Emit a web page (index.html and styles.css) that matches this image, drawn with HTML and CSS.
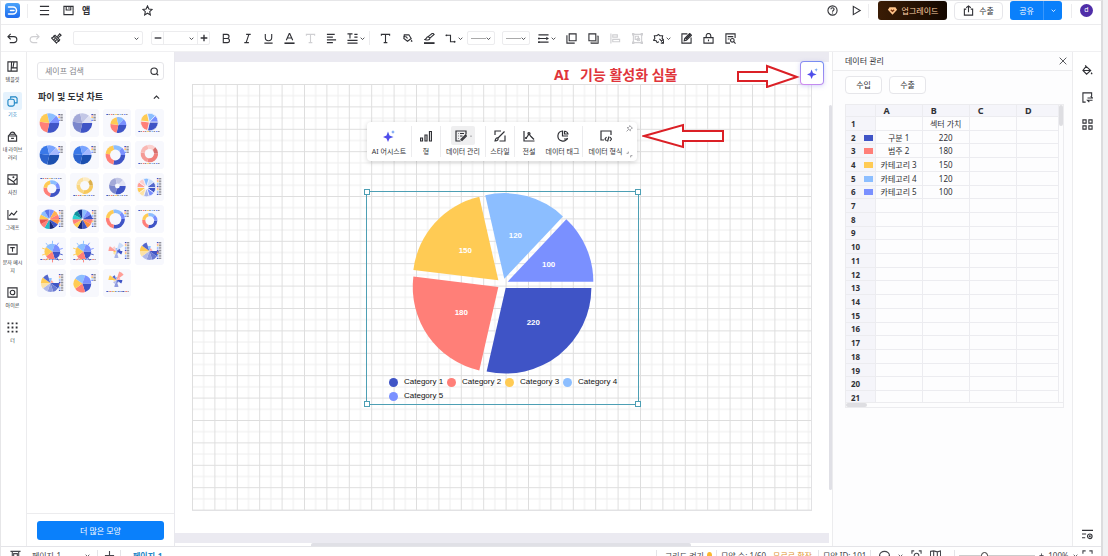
FILE: index.html
```html
<!DOCTYPE html>
<html lang="ko">
<head>
<meta charset="utf-8">
<title>데이터 관리</title>
<link rel="stylesheet" href="styles.css">
</head>
<body>
<svg class="defs" aria-hidden="true">
  <symbol id="menu" viewBox="0 0 24 24"><path d="M2 3h20M2 12h20M2 21h20"/></symbol>
  <symbol id="save" viewBox="0 0 24 24"><path d="M2 3h20v18H2zM7 3v8h10V3M13 5v3"/></symbol>
  <symbol id="star" viewBox="0 0 24 24"><path d="M12 2l3 6.600 7 .9-5.200 4.900 1.400 7.100L12 18l-6.200 3.500 1.400-7.100L2 9.500l7-.9z"/></symbol>
  <symbol id="help" viewBox="0 0 24 24"><circle cx="12" cy="12" r="10"/><path d="M8.500 9.500c0-4.500 7-4.500 7 0 0 2.500-3.500 2.500-3.500 5M12 16.500v2"/></symbol>
  <symbol id="play" viewBox="0 0 24 24"><path d="M5 3l15 9-15 9z"/></symbol>
  <symbol id="export" viewBox="0 0 24 24"><path d="M7 9H3v13h18V9h-4M12 16V2M7 6l5-4 5 4"/></symbol>
  <symbol id="chev" viewBox="0 0 24 24"><path d="M3 8l9 9 9-9"/></symbol>
  <symbol id="undo" viewBox="0 0 24 24"><path d="M8 2L2 8l6 6M2 8h13a6 6 0 0 1 0 13H6"/></symbol>
  <symbol id="redo" viewBox="0 0 24 24"><path d="M16 2l6 6-6 6M22 8H9a6 6 0 0 0 0 13h9"/></symbol>
  <symbol id="brush" viewBox="0 0 24 24"><path d="M14 8l5-6 3 3-6 5M9 5l10 10-2 3L6 7zM6 7c-1 3-3 4-5 4l11 11c1-2 2-4 5-4M6 15l3-3M9 18l3-3"/></symbol>
  <symbol id="bold" viewBox="0 0 24 24"><path d="M5 3h8a4.500 4.500 0 0 1 0 9H5zM5 12h9a4.500 4.500 0 0 1 0 9H5z"/></symbol>
  <symbol id="italic" viewBox="0 0 24 24"><path d="M9 3h10M5 21h10M15 3L9 21"/></symbol>
  <symbol id="underline" viewBox="0 0 24 24"><path d="M5 2v8a7 7 0 0 0 14 0V2M3 22h18"/></symbol>
  <symbol id="color" viewBox="0 0 24 24"><path d="M5 16L12 0l7 16M8 11h8"/><path d="M1 22.500h22" class="heavy"/></symbol>
  <symbol id="text" viewBox="0 0 24 24"><path d="M3 6V3h18v3M12 3v18M8 21h8"/></symbol>
  <symbol id="align" viewBox="0 0 24 24"><path d="M2 3h17M2 9h13M2 15h20M2 21h13"/></symbol>
  <symbol id="spacing" viewBox="0 0 24 24"><path d="M1 2h11M6.500 2v10M16 3h7M16 9h7M1 16h22M1 22h22"/></symbol>
  <symbol id="bucket" viewBox="0 0 24 24"><path d="M9 3l10 9-9 8-8-8zM3 12h15M9 3L7 1"/><path d="M21 15c-3 4-2 5 0 5s3-1 0-5z" class="solid"/></symbol>
  <symbol id="fill" viewBox="0 0 24 24"><path d="M5 4h10l5 8-8 6-8-6zM9 8l3 4M3 8h5"/><path d="M21 14c-3 4-2 5 0 5s3-1 0-5z" class="solid"/></symbol>
  <symbol id="pen" viewBox="0 0 24 24"><path d="M9 8L19 0l3 3-9 8zM9 8c-4 0-3 5-7 6 4 2 10 2 11-2"/><path d="M0 22h23" class="heavy"/></symbol>
  <symbol id="link" viewBox="0 0 24 24"><path d="M3 5h9v14h9"/><circle cx="3" cy="5" r="2" class="solid"/><circle cx="21" cy="19" r="2" class="solid"/></symbol>
  <symbol id="lines" viewBox="0 0 24 24"><path d="M1 4h22M1 12h18M1 20h22"/><path d="M18 8l6 4-6 4z" class="solid"/><circle cx="2" cy="12" r="2" class="solid"/><circle cx="2" cy="20" r="2" class="solid"/></symbol>
  <symbol id="front" viewBox="0 0 24 24"><path d="M7 2h15v15H7zM2 5v17h17"/></symbol>
  <symbol id="back" viewBox="0 0 24 24"><path d="M2 2h15v15H2zM20 7h2v15H7v-2"/><path d="M17 6h5v16H6v-5h11z" class="dim"/></symbol>
  <symbol id="distribute" viewBox="0 0 24 24"><path d="M2 1v22M6 4h10v5H6zM6 14h15v5H6z"/></symbol>
  <symbol id="group" viewBox="0 0 24 24"><path d="M3 3h18v18H3zM1 1h3v3H1zM20 1h3v3h-3zM1 20h3v3H1zM20 20h3v3h-3zM7 7h7v7H7z"/><circle cx="14" cy="14" r="3"/></symbol>
  <symbol id="fx" viewBox="0 0 24 24"><path d="M8 6l4-3 3 3h6l-1 6 3 3-5 2M8 6H3l1 6-3 4 6 1 2 4 4-2"/><path d="M14 13l8 8M17 22h6v-6"/></symbol>
  <symbol id="edit" viewBox="0 0 24 24"><path d="M14 2H2v20h20V10"/><path d="M7 17l1-5L19 1l4 4-11 11z"/><path d="M10 14L21 3" class="heavy"/></symbol>
  <symbol id="lock" viewBox="0 0 24 24"><path d="M2 10h20v12H2zM7 10V6a5 5 0 0 1 10 0v4M12 14v4"/></symbol>
  <symbol id="find" viewBox="0 0 24 24"><path d="M11 22H2V2h20v9M6 8h12M6 13h4"/><circle cx="16" cy="16" r="4"/><path d="M19 19l4 4"/></symbol>
  <symbol id="search" viewBox="0 0 24 24"><circle cx="11" cy="11" r="8.500"/><path d="M17 17l5 5"/></symbol>
  <symbol id="template" viewBox="0 0 24 24"><path d="M2 2h20v20H2zM10 2l-1 20M9 15h13M15 3l-2 12"/></symbol>
  <symbol id="shapes" viewBox="0 0 24 24"><path d="M8 6V2h11l3 3v10h-5"/><rect x="2" y="7" width="14" height="15" rx="4"/></symbol>
  <symbol id="library" viewBox="0 0 24 24"><path d="M3 11h18v11H3zM3 11l3-4h12l3 4M7 7c0-6 10-6 10 0M9 16h6"/></symbol>
  <symbol id="photo" viewBox="0 0 24 24"><path d="M2 2h20v20H2zM2 9l6 4 6 4 8-8M14 17l3 4"/><circle cx="14" cy="7" r="1"/></symbol>
  <symbol id="graph" viewBox="0 0 24 24"><path d="M2 2v20h21M5 15l5-6 5 4 7-9"/></symbol>
  <symbol id="textbox" viewBox="0 0 24 24"><path d="M2 2h20v20H2zM7 8h10M12 8v9"/></symbol>
  <symbol id="iconset" viewBox="0 0 24 24"><path d="M2 2h20v20H2z"/><circle cx="12" cy="12" r="5"/></symbol>
  <symbol id="theme" viewBox="0 0 24 24"><path d="M1 13a11 10 0 0 1 22 0l-3 1v8H4v-8z"/></symbol>
  <symbol id="dots" viewBox="0 0 24 24"><path class="heavy" d="M1 3h4M10 3h4M19 3h4M1 12h4M10 12h4M19 12h4M1 21h4M10 21h4M19 21h4"/></symbol>
  <symbol id="spark" viewBox="0 0 24 24"><path class="tint" d="M10 3l3 8 8 3-8 3-3 7-3-7-7-3 7-3zM20 0l1 3 3 1-3 1-1 3-1-3-3-1 3-1z"/></symbol>
  <symbol id="bars" viewBox="0 0 24 24"><path d="M1 16h4v6H1zM10 10h4v12h-4zM19 3h4v19h-4z"/></symbol>
  <symbol id="data" viewBox="0 0 24 24"><path d="M11 22H2V2h20v7M6 7h1M10 7h8M6 12h1M10 12h5M6 17h1M12 19l9-9 2 2-9 9z"/></symbol>
  <symbol id="style" viewBox="0 0 24 24"><path d="M2 10V2h12M22 11v11H11M8 16L21 3M2 22c1-5 3-7 6-6 1 3-1 6-6 6z"/></symbol>
  <symbol id="legend" viewBox="0 0 24 24"><path d="M2 2v20h21M6 17l6-9 4 5 6 6"/><circle cx="12" cy="7" r="2"/><circle cx="6" cy="16" r="1"/></symbol>
  <symbol id="tag" viewBox="0 0 24 24"><path d="M21 16A10 10 0 1 1 11 2v10h11M15 2c4 1 7 4 7 7M15 2v6h7M14 18h8"/></symbol>
  <symbol id="format" viewBox="0 0 24 24"><path d="M8 20H2V2h20v8M13 14l-3 4 3 4M20 14l3 4-3 4M18 13l-3 10"/></symbol>
  <symbol id="pin" viewBox="0 0 24 24"><path d="M13 2l9 9-3 1-4 4v4L4 9h4l4-4zM9 15l-7 7"/></symbol>
  <symbol id="resize" viewBox="0 0 24 24"><path d="M8 2v6H2M22 16h-6v6"/></symbol>
  <symbol id="close" viewBox="0 0 24 24"><path d="M2 2l20 20M22 2L2 22"/></symbol>
  <symbol id="replace" viewBox="0 0 24 24"><path d="M8 22H2V2h19v7M12 13h11l-4-4M23 18H12l4 4"/></symbol>
  <symbol id="tiles" viewBox="0 0 24 24"><path d="M2 2h7v7H2zM15 2h7v7h-7zM2 15h7v7H2zM15 15h7v7h-7z"/></symbol>
  <symbol id="settings" viewBox="0 0 24 24"><path d="M0 3h24M0 11h9M0 19h7"/><circle cx="17" cy="16" r="5"/><circle cx="17" cy="16" r="1"/></symbol>
  <symbol id="panel" viewBox="0 0 24 24"><path d="M1 3h22M5 3v20M19 3v20M8 8h8v12H8z"/></symbol>
  <symbol id="plus" viewBox="0 0 24 24"><path d="M12 2v20M2 12h20"/></symbol>
  <symbol id="minus" viewBox="0 0 24 24"><path d="M2 12h20"/></symbol>
  <symbol id="focus" viewBox="0 0 24 24"><path d="M2 8V2h5M17 2h5v6M2 16v6h5M17 22h5v-6"/><circle cx="12" cy="12" r="5"/></symbol>
  <symbol id="full" viewBox="0 0 24 24"><path d="M2 8V2h6M16 2h6v6M2 16v6h6M16 22h6v-6"/></symbol>
  <symbol id="map" viewBox="0 0 24 24"><path d="M1 3l7-1 8 2 7-2v19l-7 1-8-2-7 2zM8 2v18M16 4v18"/></symbol>
  <linearGradient id="sparkfill" x1="0" y1="1" x2="1" y2="0"><stop offset="0" stop-color="#5b3df0"/><stop offset=".6" stop-color="#4a55e8"/><stop offset="1" stop-color="#58b4f5"/></linearGradient>
  <linearGradient id="logofill" x1="0" y1="0" x2="0" y2="1"><stop offset="0" stop-color="#4aa3fa"/><stop offset="1" stop-color="#1d6bee"/></linearGradient>
</svg>

<div class="app">
  <header class="header">
    <svg class="logo" viewBox="0 0 30 30" role="img" aria-label="로고"><rect width="30" height="30" rx="6" fill="url(#logofill)"/><path d="M7 8h9a7 7 0 0 1 0 14H7M11 15h7" fill="none" stroke="#fff" stroke-width="3" stroke-linecap="round"/></svg>
    <span class="rule"></span>
    <button class="hbtn menu" aria-label="메뉴"><svg class="icon"><use href="#menu"/></svg></button>
    <button class="hbtn" aria-label="저장"><svg class="icon"><use href="#save"/></svg></button>
    <strong class="doc">앱</strong>
    <button class="hbtn fav" aria-label="즐겨찾기"><svg class="icon"><use href="#star"/></svg></button>
    <span class="grow"></span>
    <button class="hbtn" aria-label="도움말"><svg class="icon"><use href="#help"/></svg></button>
    <button class="hbtn" aria-label="재생"><svg class="icon"><use href="#play"/></svg></button>
    <span class="rule"></span>
    <button class="upgrade"><svg viewBox="0 0 24 24"><path d="M5 3h14l4 6-11 12L1 9z" fill="#ffc48a"/><path d="M8 9l4 4 4-4" fill="none" stroke="#7a3510" stroke-width="3"/></svg>업그레이드</button>
    <button class="outline export"><svg class="icon"><use href="#export"/></svg>수출</button>
    <div class="share"><button>공유</button><button aria-label="공유 옵션"><svg class="icon mini"><use href="#chev"/></svg></button></div>
    <span class="rule"></span>
    <span class="avatar">d</span>
  </header>

  <div class="toolbar" role="toolbar" aria-label="서식">
    <button aria-label="실행 취소"><svg class="icon"><use href="#undo"/></svg></button>
    <button class="off" aria-label="다시 실행"><svg class="icon"><use href="#redo"/></svg></button>
    <button aria-label="서식 복사"><svg class="icon"><use href="#brush"/></svg></button>
    <label class="pick font"><select aria-label="글꼴"><option></option></select><svg class="icon mini"><use href="#chev"/></svg></label>
    <div class="stepper">
      <button aria-label="작게"><svg class="icon"><use href="#minus"/></svg></button>
      <label class="pick"><select aria-label="글자 크기"><option></option></select><svg class="icon mini"><use href="#chev"/></svg></label>
      <button aria-label="크게"><svg class="icon"><use href="#plus"/></svg></button>
    </div>
    <div class="set tight">
      <button aria-label="굵게"><svg class="icon"><use href="#bold"/></svg></button>
      <button aria-label="기울임"><svg class="icon"><use href="#italic"/></svg></button>
      <button aria-label="밑줄"><svg class="icon"><use href="#underline"/></svg></button>
      <button aria-label="글자 색"><svg class="icon"><use href="#color"/></svg></button>
      <button class="off" aria-label="글자 효과"><svg class="icon"><use href="#text"/></svg></button>
      <button aria-label="정렬"><svg class="icon"><use href="#align"/></svg></button>
    </div>
    <button class="wide" aria-label="줄 간격"><svg class="icon"><use href="#spacing"/></svg><svg class="icon mini"><use href="#chev"/></svg></button>
    <span class="rule"></span>
    <div class="set">
      <button aria-label="텍스트"><svg class="icon"><use href="#text"/></svg></button>
      <button aria-label="채우기"><svg class="icon"><use href="#fill"/></svg></button>
      <button aria-label="선 색"><svg class="icon"><use href="#pen"/></svg></button>
    </div>
    <button class="wide" aria-label="연결선"><svg class="icon"><use href="#link"/></svg><svg class="icon mini"><use href="#chev"/></svg></button>
    <label class="pick line"><span class="stroke"></span><select aria-label="선 두께"><option></option></select><svg class="icon mini"><use href="#chev"/></svg></label>
    <label class="pick line"><span class="stroke"></span><select aria-label="선 종류"><option></option></select><svg class="icon mini"><use href="#chev"/></svg></label>
    <button class="wide" aria-label="화살표"><svg class="icon"><use href="#lines"/></svg><svg class="icon mini"><use href="#chev"/></svg></button>
    <button aria-label="앞으로"><svg class="icon"><use href="#front"/></svg></button>
    <button aria-label="뒤로"><svg class="icon"><use href="#back"/></svg></button>
    <button class="off" aria-label="맞춤"><svg class="icon"><use href="#distribute"/></svg></button>
    <button class="off" aria-label="그룹"><svg class="icon"><use href="#group"/></svg></button>
    <button class="wide" aria-label="효과"><svg class="icon"><use href="#fx"/></svg><svg class="icon mini"><use href="#chev"/></svg></button>
    <button aria-label="편집"><svg class="icon"><use href="#edit"/></svg></button>
    <button aria-label="잠금"><svg class="icon"><use href="#lock"/></svg></button>
    <button aria-label="찾기"><svg class="icon"><use href="#find"/></svg></button>
  </div>

  <main class="body">
    <nav class="rail">
      <button><span class="pic"><svg class="icon"><use href="#template"/></svg></span>템플릿</button>
      <button class="on"><span class="pic"><svg class="icon"><use href="#shapes"/></svg></span>기호</button>
      <button><span class="pic"><svg class="icon"><use href="#library"/></svg></span>내 라이브<br>러리</button>
      <button><span class="pic"><svg class="icon"><use href="#photo"/></svg></span>사진</button>
      <button><span class="pic"><svg class="icon"><use href="#graph"/></svg></span>그래프</button>
      <button><span class="pic"><svg class="icon"><use href="#textbox"/></svg></span>문자 메시<br>지</button>
      <button><span class="pic"><svg class="icon"><use href="#iconset"/></svg></span>아이콘</button>
      <button><span class="pic"><svg class="icon"><use href="#dots"/></svg></span>더</button>
    </nav>

    <aside class="shapes">
      <div class="search"><input type="text" placeholder="셰이프 검색" aria-label="셰이프 검색"><svg class="icon"><use href="#search"/></svg></div>
      <h2>파이 및 도넛 차트 <svg class="icon up"><use href="#chev"/></svg></h2>
      <div class="thumbs" id="thumbs"></div>
      <div class="more"><button>더 많은 모양</button></div>
    </aside>

    <section class="canvas" aria-label="캔버스">
      <div class="sheet"></div>
      <svg class="grid" aria-hidden="true">
        <pattern id="cell" width="22.4" height="22.4" patternUnits="userSpaceOnUse"><path d="M11.700 0v22.400M0 11.700h22.400" stroke="#eeeeee"/><path d="M.5 0v22.400M0 .5h22.400" stroke="#dedede" fill="none"/></pattern>
        <rect width="100%" height="100%" fill="url(#cell)"/>
      </svg>
      <span class="vscroll"></span><span class="hscroll"></span>

      <p class="note">AI&nbsp; &nbsp;기능 활성화 심볼</p>
      <svg class="arrow first" viewBox="0 0 64 24"><path d="M2 8h29V2l30 11-30 10v-6H2z"/></svg>
      <svg class="arrow second" viewBox="0 0 84 26"><path d="M2 13L41 2v6h40v10H41v6z"/></svg>
      <button class="ai" aria-label="AI"><svg class="icon"><use href="#spark"/></svg></button>

      <div class="float" role="toolbar" aria-label="차트">
        <button class="w44"><span class="pic"><svg class="icon"><use href="#spark"/></svg></span>AI 어시스트</button>
        <button class="w30"><span class="pic"><svg class="icon"><use href="#bars"/></svg></span>형</button>
        <button class="w44"><span class="pic active"><svg class="icon"><use href="#data"/></svg><svg class="icon tiny"><use href="#chev"/></svg></span>데이터 관리</button>
        <button class="w30"><span class="pic"><svg class="icon"><use href="#style"/></svg></span>스타일</button>
        <button class="w28 open"><span class="pic"><svg class="icon"><use href="#legend"/></svg></span>전설</button>
        <button class="w40"><span class="pic"><svg class="icon"><use href="#tag"/></svg></span>데이터 태그</button>
        <button class="w44 open"><span class="pic"><svg class="icon"><use href="#format"/></svg></span>데이터 형식</button>
        <svg class="icon corner"><use href="#pin"/></svg>
        <svg class="icon corner low"><use href="#resize"/></svg>
      </div>

      <div class="chart">
        <svg class="pie" viewBox="366 191 273 182" role="img" aria-label="원형 차트">
          <path fill="#3f54c6" d="M505.700 287h86.300a86.300 86.300 0 0 1-105.500 84.100z"/>
          <path fill="#ff7f78" d="M498.300 286L479.100 370.100A86.300 86.300 0 0 1 412.700 275.500z"/>
          <path fill="#ffcb54" d="M498.300 279.300L412.700 268.800A86.300 86.300 0 0 1 479.100 195.200z"/>
          <path fill="#8cbeff" d="M504.300 277.700L485.100 193.600A86.300 86.300 0 0 1 563.400 214.900z"/>
          <path fill="#7a90ff" d="M507.700 280.700L566.800 217.900A86.300 86.300 0 0 1 594 280.700z"/>
          <g class="vals"><text x="533.500" y="324.500">220</text><text x="461" y="314">180</text><text x="465" y="252">150</text><text x="515.500" y="237">120</text><text x="549" y="265.500">100</text></g>
        </svg>
        <ul class="legend">
          <li class="c1">Category 1</li><li class="c2">Category 2</li><li class="c3">Category 3</li><li class="c4">Category 4</li><li class="c5">Category 5</li>
        </ul>
        <i class="grip nw"></i><i class="grip ne"></i><i class="grip sw"></i><i class="grip se"></i>
      </div>
    </section>

    <aside class="data">
      <div class="title"><h2>데이터 관리</h2><button aria-label="닫기"><svg class="icon"><use href="#close"/></svg></button></div>
      <div class="actions"><button class="outline">수입</button><button class="outline">수출</button></div>
      <div class="sheetbox">
        <div class="clip">
        <table>
          <colgroup><col class="k0"><col class="k1"><col class="k1"><col class="k1"><col class="k4"></colgroup>
          <thead><tr><th></th><th>A</th><th>B</th><th>C</th><th>D</th></tr></thead>
          <tbody>
            <tr><th>1</th><td></td><td>섹터 가치</td><td></td><td></td></tr>
            <tr><th>2<i class="c1"></i></th><td>구분 1</td><td>220</td><td></td><td></td></tr>
            <tr><th>3<i class="c2"></i></th><td>범주 2</td><td>180</td><td></td><td></td></tr>
            <tr><th>4<i class="c3"></i></th><td>카테고리 3</td><td>150</td><td></td><td></td></tr>
            <tr><th>5<i class="c4"></i></th><td>카테고리 4</td><td>120</td><td></td><td></td></tr>
            <tr><th>6<i class="c5"></i></th><td>카테고리 5</td><td>100</td><td></td><td></td></tr>
            <tr><th>7</th><td></td><td></td><td></td><td></td></tr>
            <tr><th>8</th><td></td><td></td><td></td><td></td></tr>
            <tr><th>9</th><td></td><td></td><td></td><td></td></tr>
            <tr><th>10</th><td></td><td></td><td></td><td></td></tr>
            <tr><th>11</th><td></td><td></td><td></td><td></td></tr>
            <tr><th>12</th><td></td><td></td><td></td><td></td></tr>
            <tr><th>13</th><td></td><td></td><td></td><td></td></tr>
            <tr><th>14</th><td></td><td></td><td></td><td></td></tr>
            <tr><th>15</th><td></td><td></td><td></td><td></td></tr>
            <tr><th>16</th><td></td><td></td><td></td><td></td></tr>
            <tr><th>17</th><td></td><td></td><td></td><td></td></tr>
            <tr><th>18</th><td></td><td></td><td></td><td></td></tr>
            <tr><th>19</th><td></td><td></td><td></td><td></td></tr>
            <tr><th>20</th><td></td><td></td><td></td><td></td></tr>
            <tr><th>21</th><td></td><td></td><td></td><td></td></tr>
          </tbody>
        </table>
        <span class="vthumb"></span>
        </div>
        <span class="hthumb"></span>
      </div>
    </aside>

    <nav class="rail2">
      <button aria-label="스타일"><svg class="icon"><use href="#bucket"/></svg></button>
      <button aria-label="교체"><svg class="icon"><use href="#replace"/></svg></button>
      <button aria-label="구성요소"><svg class="icon"><use href="#tiles"/></svg></button>
      <span class="grow"></span>
      <button aria-label="설정"><svg class="icon"><use href="#settings"/></svg></button>
    </nav>
  </main>

  <footer class="status">
    <button class="pages" aria-label="페이지 목록"><svg class="icon"><use href="#panel"/></svg></button>
    <button class="page">페이지-1<svg class="icon mini"><use href="#chev"/></svg></button>
    <button class="add" aria-label="페이지 추가"><svg class="icon"><use href="#plus"/></svg></button>
    <button class="tab">페이지-1</button>
    <span class="grow"></span>
    <span class="cell gridtoggle">그리드 켜기 <i class="coin"></i></span>
    <span class="cell count">모양 수: 1/60 <a href="#">무료로 확장</a></span>
    <span class="cell id">모양 ID: 101</span>
    <span class="cell tools"><svg class="icon"><use href="#theme"/></svg><svg class="icon mini"><use href="#chev"/></svg><svg class="icon"><use href="#focus"/></svg><svg class="icon"><use href="#map"/></svg></span>
    <span class="cell zoom"><input type="range" aria-label="확대" value="32"><svg class="icon mini"><use href="#plus"/></svg><span>100%</span><svg class="icon mini"><use href="#chev"/></svg><svg class="icon"><use href="#full"/></svg></span>
  </footer>
</div>
<script src="app.js"></script>
</body>
</html>
```
FILE: styles.css
```css
* { box-sizing: border-box; }
body {
  margin: 0;
  height: 100vh;
  overflow: hidden;
  background: #f1f1f3;
  color: #303136;
  font: 8px/12px "Noto Sans", "Noto Sans CJK KR", sans-serif;
}
button, input, select { font: inherit; color: inherit; margin: 0; padding: 0; border: 0; background: none; }
button { display: flex; align-items: center; justify-content: center; }
h2, p, ul { margin: 0; padding: 0; }
.defs { position: absolute; width: 0; height: 0; }
.icon { width: 11px; height: 11px; flex: none; fill: none; stroke: currentColor; stroke-width: 2.400; overflow: visible; }
.icon.mini { width: 5px; height: 5px; stroke-width: 4; }
.icon.tiny { width: 2px; height: 2px; stroke-width: 8; }
.icon.up { width: 7px; height: 7px; stroke-width: 4; transform: rotate(180deg); }
.heavy { stroke-width: 4; }
.solid { fill: currentColor; stroke: none; }
.dim { fill: #999; stroke: none; opacity: .6; }
.tint { fill: url(#sparkfill); stroke: none; }
.grow { flex: 1; }
.rule { width: 1px; height: 14px; background: #ececee; flex: none; }
.c1 { --c: #3f54c6; }
.c2 { --c: #ff7f78; }
.c3 { --c: #ffcb54; }
.c4 { --c: #8cbeff; }
.c5 { --c: #7a90ff; }

.app {
  display: flex;
  flex-direction: column;
  height: calc(100vh + 9px);
  margin-right: 5px;
  border: 1px solid #e6e6e8;
  border-right: 2px solid #dcdcde;
  background: #fff;
}

.header { display: flex; align-items: center; height: 24px; padding: 0 8px 4px 4px; border-bottom: 1px solid #ececee; flex: none; }
.logo { width: 15px; height: 15px; margin-right: 7px; }
.hbtn { width: 24px; height: 20px; }
.menu { margin-left: 4px; }
.doc { font-size: 9px; margin-left: 2px; }
.fav { margin-left: 45px; }
.upgrade { width: 69px; height: 19px; margin: 0 7px 0 9px; gap: 4px; border-radius: 3px; background: linear-gradient(90deg, #3a1c05, #140800); color: #ffd2a6; }
.upgrade svg { width: 11px; height: 10px; }
.outline { height: 18px; border: 1px solid #e6e6ea; border-radius: 4px; background: #fff; }
.export { width: 49px; gap: 5px; margin-right: 7px; }
.share { display: flex; width: 52px; height: 19px; margin-right: 9px; border-radius: 3px; background: #0a80fb; color: #fff; }
.share button:first-child { flex: 1; border-right: 1px solid #3b98fb; }
.share button:last-child { width: 18px; }
.avatar { width: 13px; height: 13px; margin: 0 0 0 8px; border-radius: 50%; background: #4f2da8; color: #fff; font-size: 7px; line-height: 12px; text-align: center; }

.toolbar { display: flex; align-items: center; height: 26px; flex: none; }
.toolbar > button, .set button { width: 22px; height: 22px; flex: none; }
.set { display: flex; margin-left: 4px; }
.set.tight { margin-left: 6px; }
.set.tight button { width: 21px; }
.toolbar > .wide { width: 27px; gap: 2px; }
.toolbar > .off, .set .off { color: #cfcfd2; }
.pick { display: flex; align-items: center; justify-content: flex-end; height: 14px; padding: 0 3px; border: 1px solid #ececee; border-radius: 2px; }
.pick select { appearance: none; flex: 1; min-width: 0; height: 12px; }
.font { width: 70px; margin: 0 8px 0 6px; }
.stepper { display: flex; align-items: center; width: 59px; height: 14px; border: 1px solid #ececee; border-radius: 2px; }
.stepper button { width: 11px; }
.stepper .icon:not(.mini) { width: 8px; height: 8px; stroke-width: 4; }
.stepper .pick { flex: 1; border-width: 0 1px; border-radius: 0; }
.line { width: 28px; margin-right: 7px; }
.stroke { width: 15px; height: 1px; background: #aaa; flex: none; }

.line + .line { margin-right: 3px; }

.body { display: flex; flex: 1; min-height: 0; border-top: 1px solid #f0f0f2; }
.rail { display: flex; flex-direction: column; gap: 9px; width: 26px; padding: 5px 2px 0 0; border-right: 1px solid #ececee; flex: none; }
.rail button { flex-direction: column; font-size: 5px; line-height: 8px; }
.rail .pic { display: grid; place-items: center; width: 19px; height: 18px; border-radius: 2px; }
.rail .on { color: #1b84c4; }
.rail .on .pic { background: #e5f2fd; }

.shapes { display: flex; flex-direction: column; width: 148px; padding: 10px 10px 0; border-right: 1px solid #e9e9ee; flex: none; }
.search { display: flex; align-items: center; height: 18px; padding: 0 4px 0 7px; border: 1px solid #e6e6ea; border-radius: 3px; flex: none; }
.search input { flex: 1; min-width: 0; outline: 0; }
.search input::placeholder { color: #85858b; opacity: 1; }
.search .icon { width: 9px; height: 9px; stroke-width: 3; }
.shapes h2 { display: flex; align-items: center; justify-content: space-between; height: 29px; padding: 5px 4px 0 1px; font-size: 9px; flex: none; }
.thumbs { display: grid; grid-template-columns: repeat(4, 1fr); gap: 4px; }
.thumbs svg { display: block; width: 100%; height: 28px; border-radius: 3px; background: #f7f8fd; }
.more { margin: auto -10px 0; padding: 7px 10px 6px; border-top: 1px solid #ececee; }
.more button { width: 100%; height: 19px; border-radius: 3px; background: #0a80fb; color: #fff; }

.canvas { position: relative; flex: 1; min-width: 0; overflow: hidden; background: #fff; }
.sheet { height: calc(100% - 3px); margin-right: 3px; border: solid #ebeaf1; border-width: 10px 0; }
.grid { position: absolute; left: 17px; top: 32px; width: calc(100% - 37px); height: 427px; border: solid #e2e2e4; border-width: 0 1px 1px 0; }
.vscroll { position: absolute; right: 0; top: 53px; bottom: 56px; width: 3px; border-radius: 2px; background: #e0e0e6; }
.hscroll { position: absolute; left: 136px; right: 141px; bottom: 0; height: 3px; border-radius: 2px 2px 0 0; background: #e0e0e6; }
.note { position: absolute; left: 379px; top: 12px; color: #e0353b; font-size: 14px; line-height: 22px; font-weight: 700; white-space: pre; }
.arrow { position: absolute; fill: #fff; stroke: #db2026; stroke-width: 2; }
.first { left: 561px; top: 12px; width: 64px; height: 24px; }
.second { left: 467px; top: 71px; width: 84px; height: 26px; }
.ai { position: absolute; left: 625px; top: 9px; width: 24px; height: 24px; border: 1px solid transparent; border-radius: 4px; background: linear-gradient(#fff, #fff) padding-box, linear-gradient(20deg, #d58af0, #6d8df2) border-box; box-shadow: 0 1px 4px #a9a5f080; }

.float { position: absolute; left: 192px; top: 70px; display: flex; align-items: center; width: 270px; height: 39px; border-radius: 4px; background: #fff; box-shadow: 0 1px 5px #0000002e; }
.float button { position: relative; flex-direction: column; gap: 2px; height: 31px; border-right: 1px solid #ececee; font-size: 7px; line-height: 10px; white-space: nowrap; }
.float .open { border-right: 0; }
.float .pic { display: flex; align-items: center; justify-content: center; gap: 3px; width: 24px; height: 19px; }
.float .pic .icon:not(.tiny) { width: 12px; height: 12px; }
.active { border-radius: 2px; background: #efeff0; }
.w44 { width: 45px; }
.w40 { width: 40px; }
.w30 { width: 29px; }
.w28 { width: 28px; }
.corner { position: absolute; right: 4px; top: 3px; width: 7px; height: 7px; color: #77777c; }
.corner.low { top: 29px; }

.chart { position: absolute; left: 191px; top: 139px; width: 273px; height: 214px; border: 1px solid #4d9fb4; }
.pie { display: block; width: 100%; height: 182px; }
.vals { fill: #fff; font: 700 8px "Liberation Sans", sans-serif; text-anchor: middle; }
.legend { display: grid; grid-template-columns: repeat(4, 58px); row-gap: 2px; margin: 2px 0 0 22px; list-style: none; color: #111; font-family: "Liberation Sans", Arial, sans-serif; }
.legend li { display: flex; align-items: center; gap: 6px; white-space: nowrap; }
.legend li::before { content: ""; width: 9px; height: 9px; border-radius: 50%; background: var(--c); flex: none; }
.grip { position: absolute; width: 6px; height: 6px; border: 1px solid #4d9fb4; background: #fff; }
.nw { left: -3px; top: -3px; }
.ne { right: -3px; top: -3px; }
.sw { left: -3px; bottom: -3px; }
.se { right: -3px; bottom: -3px; }

.data { width: 240px; border-left: 1px solid #ececee; background: #fdfdfe; flex: none; }
.title { display: flex; align-items: center; justify-content: space-between; height: 19px; padding: 0 5px 0 12px; border-bottom: 1px solid #ececee; }
.title h2 { font-size: 8px; font-weight: 400; }
.title .icon { width: 8px; height: 8px; }
.actions { display: flex; gap: 7px; padding: 5px 12px 10px; }
.actions .outline { width: 37px; }
.sheetbox { width: 219px; margin-left: 12px; border: 1px solid #ececef; }
.clip { display: flex; height: 298px; overflow: hidden; border-bottom: 1px solid #ececef; }
.clip table { width: 213px; height: 300px; border-collapse: collapse; table-layout: fixed; flex: none; }
.k0 { width: 29px; }
.k1 { width: 47px; }
.k4 { width: 42px; }
td, th { padding: 0; border: solid #ececf0; border-width: 0 1px 1px 0; line-height: 11px; text-align: center; white-space: nowrap; }
th { background: #f5f5fa; font-size: 8px; text-align: left; }
thead th { padding-left: 8px; font-size: 9px; }
tbody th { padding-left: 5px; }
th i { float: right; width: 9px; height: 6px; margin: 3px 2px 0 0; background: var(--c); }
.vthumb { width: 4px; height: 21px; border-radius: 2px; background: #dedee2; }
.hthumb { display: block; width: 21px; height: 4px; border-radius: 2px; background: #dedee2; }

.rail2 { display: flex; flex-direction: column; gap: 7px; width: 29px; padding: 8px 0 2px; border-left: 1px solid #ececee; flex: none; }
.rail2 button { height: 20px; }

.status { display: flex; align-items: center; height: 18px; padding: 0 8px; border-top: 1px solid #e4e4e8; color: #45464c; white-space: nowrap; flex: none; }
.pages { width: 12px; }
.page { gap: 24px; width: 76px; padding-left: 4px; }
.add { width: 24px; margin-right: 12px; border: solid #e4e4e8; border-width: 0 1px; }
.tab { color: #1b84c4; font-weight: 700; }
.cell { display: flex; align-items: center; gap: 3px; padding: 0 4px; border-left: 1px solid #e4e4e8; }
.cell a { margin-left: 4px; color: #e0922e; text-decoration: none; }
.coin { width: 7px; height: 7px; border-radius: 50%; background: #fbb72d; }
.gridtoggle { width: 60px; padding-left: 8px; }
.count { width: 102px; }
.id { width: 52px; }
.tools { gap: 8px; width: 84px; padding: 0 8px; }
.zoom { justify-content: space-between; width: 139px; padding-right: 0; }
.zoom input { width: 76px; height: 8px; appearance: none; background: linear-gradient(#ccc, #ccc) center / 100% 1px no-repeat; }
.zoom input::-webkit-slider-thumb { appearance: none; width: 7px; height: 7px; border: 1px solid #333; border-radius: 50%; background: #fff; }
```
FILE: app.js
```js
const base = ['#3f54c6', '#ff7f78', '#ffcb54', '#8cbeff', '#7a90ff'];
const lilac = ['#3f54c6', '#7a86cc', '#a3a9d8', '#c3c7e6', '#e0e2f3'];
const blue = ['#1c50b0', '#2b62cc', '#3a78e8', '#7aa4ff', '#a4b8ff'];
const red = ['#f0807c', '#f49a96', '#f9b8b4', '#fbd0ce', '#d86e6c'];
const gold = ['#f7c95c', '#f9d680', '#fbe1a2', '#fdecc4', '#dcb04c'];
const many = ['#ff8f3c', '#3f54c6', '#1b2a7a', '#24b9c4', '#ff7f78', '#e8554e', '#ffcb54', '#8cbeff', '#5b78ec', '#7a90ff', '#ffb050', '#ff7f78'];
const vivid = ['#ff7f78', '#ff8f3c', '#3f54c6', '#1b2a7a', '#ffcb54', '#ff7f78', '#2ad0d0', '#0e8f9c', '#12308c', '#8cbeff', '#7a90ff', '#3f54c6'];
const fan = ['#3f54c6', '#7a90ff', '#a9b5e8', '#ffe3a4', '#ffcb54', '#ff9f98', '#ffd0cd', '#8cbeff', '#c9dcfb', '#5468cc'];
const swirl = ['#3f54c6', '#6878d2', '#8e9ade', '#b0b9ea', '#fbe2a8', '#ffcb54', '#5468cc', '#8cbeff', '#ff9f98', '#ffb0aa'];

const flat = [220, 180, 150, 120, 100];
const even = n => Array(n).fill(1);
const up = [9.5, 9.3, 9, 9, 9.5, 9.5, 9, 5, 3, 3];
const odd = [6, 3, 7, 4, 3, 8, 5, 3, 9, 4];

const thumbs = [
  { x: 12, y: 14, r: 9.8, c: base, k: 'right' },
  { x: 12, y: 14, r: 9.8, c: lilac, k: 'right' },
  { x: 15, y: 16, r: 8, c: base, k: 'top' },
  { x: 14, y: 13, r: 8.8, c: base, k: 'bottom', gap: 1 },
  { x: 12, y: 14, r: 9.8, c: blue, k: 'right' },
  { x: 12, y: 14, r: 9.2, c: blue, k: 'right' },
  { x: 12, y: 14, r: 9.8, h: 5.4, c: base, k: 'right' },
  { x: 14, y: 12.6, r: 8.7, h: 4.7, c: red, k: 'bottom' },
  { x: 14.4, y: 15.6, r: 8.3, h: 4.7, c: base, k: 'top' },
  { x: 14.4, y: 12.6, r: 8.3, h: 4.7, c: gold, k: 'bottom' },
  { x: 14, y: 13, r: 8.3, h: 2.4, c: lilac, k: 'bottom' },
  { x: 11, y: 14.5, r: 9.3, h: 2, c: fan, v: even(10), k: 'list', gap: 1 },
  { x: 12, y: 14.3, r: 9.8, h: 1, c: many, v: even(12), k: 'list' },
  { x: 12, y: 14.3, r: 9.8, h: 1, c: vivid, v: even(12), k: 'list' },
  { x: 12, y: 14, r: 9.5, h: 6, c: base, k: 'right' },
  { x: 14.4, y: 15.6, r: 7.6, h: 4.4, c: base, k: 'top' },
  { x: 15, y: 14.6, r: 7.8, c: base, v: even(5), k: 'foot', rays: 1 },
  { x: 13, y: 14.6, r: 7.8, c: base, v: even(5), k: 'foot', rays: 1 },
  { x: 13, y: 14, r: 1, c: fan, v: even(10), radii: odd, k: 'list' },
  { x: 14, y: 14, r: 1, c: swirl, v: even(10), radii: up, k: 'list' },
  { x: 13, y: 14, r: 1, c: swirl, v: even(10), radii: up, k: 'list' },
  { x: 12, y: 14.6, r: 8.8, c: base, v: even(5), k: 'right' },
  { x: 13, y: 11, r: 1, c: swirl, v: even(10), radii: odd, k: 'foot' }
];

function polar(x, y, r, a) {
  return `${(x + r * Math.cos(a)).toFixed(2)} ${(y + r * Math.sin(a)).toFixed(2)}`;
}

function key(kind) {
  const dash = (x, y, i, w) => `<rect x="${x}" y="${y}" width="1.6" height="1" fill="${base[i % 5]}"/><rect x="${x + 2}" y="${y}" width="${w}" height=".9" fill="#85858f"/>`;
  let out = '';
  if (kind === 'right') for (let i = 0; i < 5; i++) out += dash(21, 5 + i * 1.5, i, 2.4);
  if (kind === 'list') for (let i = 0; i < 11; i++) out += dash(21.5, 5 + i * 1.6, i, 2.4);
  if (kind === 'top') for (let i = 0; i < 5; i++) out += dash(3 + i * 4.4, 5, i, 1.6);
  if (kind === 'bottom') for (let i = 0; i < 5; i++) out += dash(3 + i * 4.4, 22, i, 1.6);
  if (kind === 'foot') for (let i = 0; i < 7; i++) out += dash(3 + i * 3.2, 22, i, 1.2);
  return out;
}

function draw(t) {
  const values = t.v || flat;
  const total = values.reduce((a, b) => a + b, 0);
  let a = 0;
  let out = '';
  values.forEach((v, i) => {
    const b = a + v / total * Math.PI * 2;
    const r = t.radii ? t.radii[i] : t.r;
    const color = t.c[i % t.c.length];
    const edge = t.gap ? ' stroke="#f7f8fd" stroke-width=".7"' : '';
    out += `<path fill="${color}"${edge} d="M${t.x} ${t.y}L${polar(t.x, t.y, r, a)}A${r} ${r} 0 0 1 ${polar(t.x, t.y, r, b)}z"/>`;
    if (t.rays) {
      [a + 0.3, b - 0.3].forEach(m => {
        out += `<path stroke="${color}" stroke-width=".9" d="M${polar(t.x, t.y, r, m)}L${polar(t.x, t.y, r + 3, m)}"/>`;
      });
    }
    a = b;
  });
  if (t.h) out += `<circle cx="${t.x}" cy="${t.y}" r="${t.h}" fill="#f7f8fd"/>`;
  return `<svg viewBox="0 0 28 28">${out}${key(t.k)}</svg>`;
}

document.getElementById('thumbs').innerHTML = thumbs.map(draw).join('');
```
